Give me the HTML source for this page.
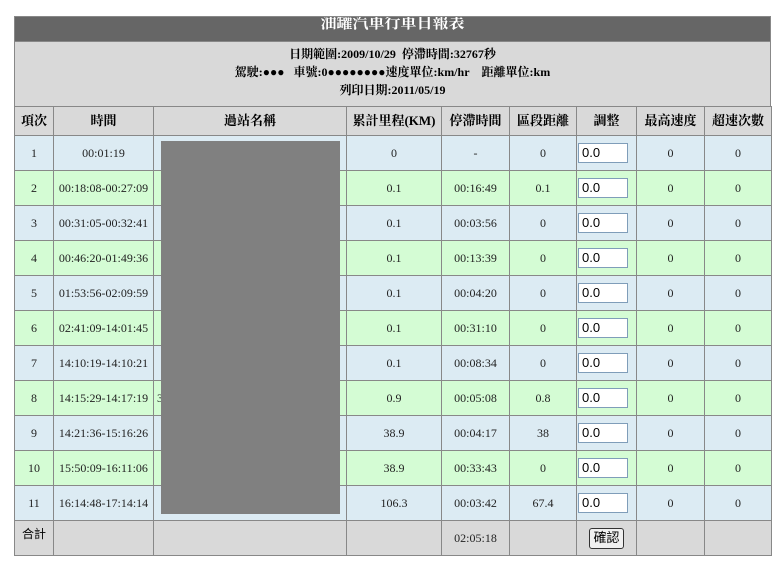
<!DOCTYPE html>
<html><head><meta charset="utf-8"><style>
body{margin:0;background:#fff;font-family:"Liberation Serif","Noto Serif CJK SC","Noto Sans CJK TC",serif;}
.wrap{position:absolute;left:14px;top:16px;width:757px;}
.title{height:25px;background:#666;color:#fff;text-align:center;font-size:16px;line-height:14px;font-weight:bold;border:1px solid #888;border-bottom:none;box-sizing:border-box;overflow:hidden}
.info{height:65px;background:#d9d9d9;border:1px solid #888;border-bottom:none;box-sizing:border-box;text-align:center;font-size:12px;font-weight:bold;line-height:18px;padding-top:3px;color:#000}
table{border-collapse:collapse;table-layout:fixed;width:757px;font-size:12px;}
td,th{border:1px solid #888;text-align:center;padding:0;color:#222;line-height:14px}
th{height:28px;background:#d9d9d9;font-size:13px;font-weight:bold;color:#000}
tr.b td{background:#dcebf3;height:34px}
tr.g td{background:#d4fcd4;height:34px}
tr.f td{background:#d9d9d9;height:34px}
.in{width:50px;height:20px;border:1px solid #7f9db9;background:#fff;font-size:13px;text-align:left;line-height:18px;padding-left:3px;box-sizing:border-box;margin-left:1px;font-family:"Liberation Sans",sans-serif;color:#000}
.btn{display:inline-block;width:35px;height:21px;border:1px solid #333;border-radius:3px;background:#f0f0f0;font-size:13px;line-height:18px;font-family:"Liberation Sans","Noto Sans CJK TC",sans-serif;color:#000;box-sizing:border-box;vertical-align:middle}
.gray{position:absolute;left:161px;top:141px;width:179px;height:373px;background:#808080}
</style></head><body>
<div class="wrap">
<div class="title">油罐汽車行車日報表</div>
<div class="info">日期範圍:2009/10/29&nbsp;&nbsp;停滯時間:32767秒<br>駕駛:●●●&nbsp;&nbsp;&nbsp;車號:0●●●●●●●●速度單位:km/hr&nbsp;&nbsp;&nbsp;&nbsp;距離單位:km<br>列印日期:2011/05/19</div>
<table>
<colgroup><col style="width:39px"><col style="width:100px"><col style="width:193px"><col style="width:95px"><col style="width:68px"><col style="width:67px"><col style="width:60px"><col style="width:68px"><col style="width:67px"></colgroup>
<tr><th>項次</th><th>時間</th><th>過站名稱</th><th>累計里程(KM)</th><th>停滯時間</th><th>區段距離</th><th>調整</th><th>最高速度</th><th>超速次數</th></tr>
<tr class="b"><td>1</td><td>00:01:19</td><td></td><td>0</td><td>-</td><td>0</td><td><div class="in">0.0</div></td><td>0</td><td>0</td></tr>
<tr class="g"><td>2</td><td>00:18:08-00:27:09</td><td></td><td>0.1</td><td>00:16:49</td><td>0.1</td><td><div class="in">0.0</div></td><td>0</td><td>0</td></tr>
<tr class="b"><td>3</td><td>00:31:05-00:32:41</td><td></td><td>0.1</td><td>00:03:56</td><td>0</td><td><div class="in">0.0</div></td><td>0</td><td>0</td></tr>
<tr class="g"><td>4</td><td>00:46:20-01:49:36</td><td></td><td>0.1</td><td>00:13:39</td><td>0</td><td><div class="in">0.0</div></td><td>0</td><td>0</td></tr>
<tr class="b"><td>5</td><td>01:53:56-02:09:59</td><td></td><td>0.1</td><td>00:04:20</td><td>0</td><td><div class="in">0.0</div></td><td>0</td><td>0</td></tr>
<tr class="g"><td>6</td><td>02:41:09-14:01:45</td><td></td><td>0.1</td><td>00:31:10</td><td>0</td><td><div class="in">0.0</div></td><td>0</td><td>0</td></tr>
<tr class="b"><td>7</td><td>14:10:19-14:10:21</td><td></td><td>0.1</td><td>00:08:34</td><td>0</td><td><div class="in">0.0</div></td><td>0</td><td>0</td></tr>
<tr class="g"><td>8</td><td>14:15:29-14:17:19</td><td style="text-align:left;padding-left:3px">3</td><td>0.9</td><td>00:05:08</td><td>0.8</td><td><div class="in">0.0</div></td><td>0</td><td>0</td></tr>
<tr class="b"><td>9</td><td>14:21:36-15:16:26</td><td></td><td>38.9</td><td>00:04:17</td><td>38</td><td><div class="in">0.0</div></td><td>0</td><td>0</td></tr>
<tr class="g"><td>10</td><td>15:50:09-16:11:06</td><td></td><td>38.9</td><td>00:33:43</td><td>0</td><td><div class="in">0.0</div></td><td>0</td><td>0</td></tr>
<tr class="b"><td>11</td><td>16:14:48-17:14:14</td><td></td><td>106.3</td><td>00:03:42</td><td>67.4</td><td><div class="in">0.0</div></td><td>0</td><td>0</td></tr>
<tr class="f"><td style="vertical-align:top;padding-top:6px;height:28px;font-family:'Liberation Sans','Noto Sans CJK TC',sans-serif;color:#000">合計</td><td></td><td></td><td></td><td>02:05:18</td><td></td><td><span class="btn">確認</span></td><td></td><td></td></tr>
</table>
</div>
<div class="gray"></div>
</body></html>
